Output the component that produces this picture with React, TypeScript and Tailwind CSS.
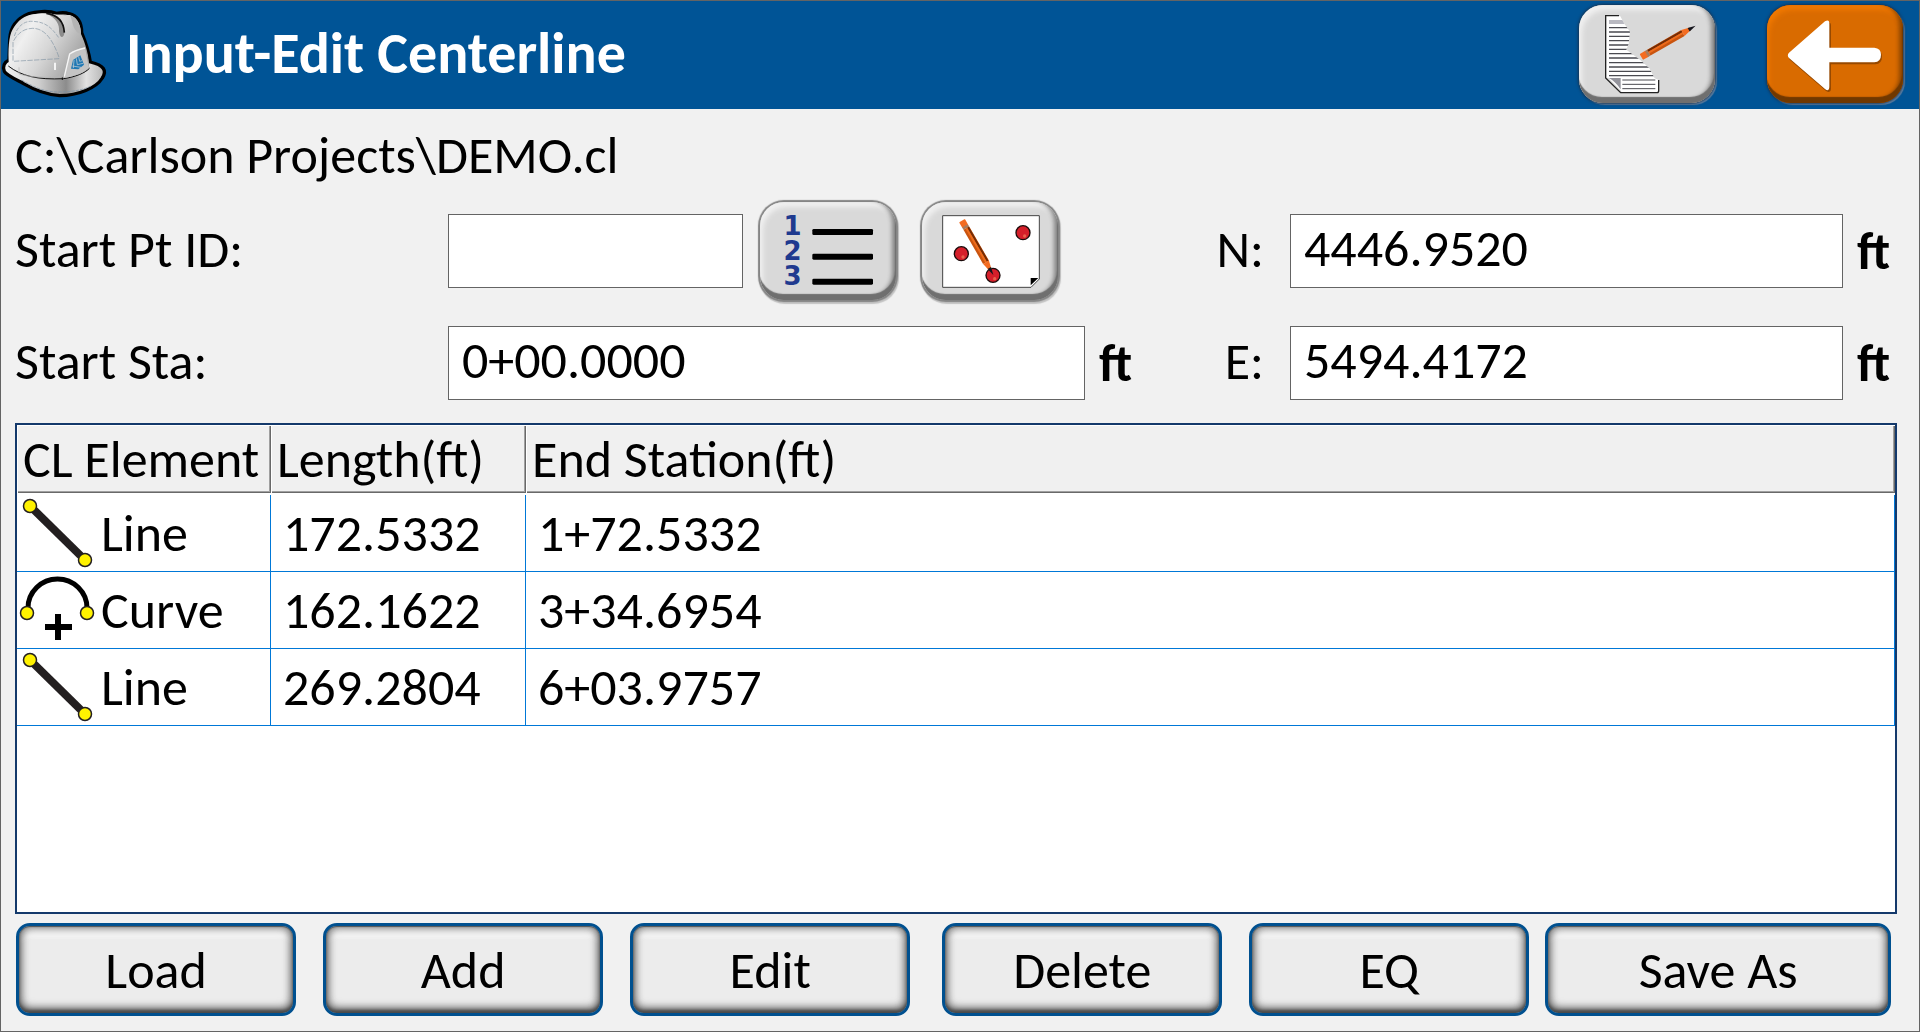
import { ReactNode, useState } from "react";

type ElementType = {
  kind: "Line" | "Curve";
  length: string;
  station: string;
};

const elements: ElementType[] = [
  { kind: "Line", length: "172.5332", station: "1+72.5332" },
  { kind: "Curve", length: "162.1622", station: "3+34.6954" },
  { kind: "Line", length: "269.2804", station: "6+03.9757" },
];

const actions = [
  { label: "Load", size: "flex-[280]" },
  { label: "Add", size: "flex-[280] ml-[27px]" },
  { label: "Edit", size: "flex-[280] ml-[27px]" },
  { label: "Delete", size: "flex-[280] ml-8" },
  { label: "EQ", size: "flex-[280] ml-[27px]" },
  { label: "Save As", size: "flex-[347] ml-4" },
];

const HardHat = () => (
  <svg viewBox="0 0 324 288" className="w-[108px] h-24 shrink-0" aria-hidden="true">
    <defs>
      <linearGradient id="shell" x1="0" y1="0" x2="1" y2="0.5">
        <stop offset="0" stopColor="#c9c9c9" />
        <stop offset="0.3" stopColor="#f0f0f0" />
        <stop offset="0.6" stopColor="#d6d6d6" />
        <stop offset="1" stopColor="#a0a0a0" />
      </linearGradient>
      <linearGradient id="brim" x1="0" y1="0" x2="1" y2="0">
        <stop offset="0" stopColor="#f2f2f2" />
        <stop offset="0.35" stopColor="#cfcfcf" />
        <stop offset="0.62" stopColor="#8c8c8c" />
        <stop offset="0.82" stopColor="#e2e2e2" />
        <stop offset="1" stopColor="#b5b5b5" />
      </linearGradient>
    </defs>
    <path
      d="M24 162 C10 168 4 182 10 196 C14 206 44 220 66 232 C104 254 140 266 176 269 C232 268 286 246 304 216 C318 194 310 178 268 168 C262 130 252 104 242 80 C242 52 232 30 204 23 C190 17 176 20 166 22 C140 12 100 18 84 23 C52 36 28 62 26 100 Z"
      fill="url(#brim)"
      stroke="#000"
      strokeWidth="10"
      strokeLinejoin="round"
    />
    <path
      d="M24 182 C20 130 24 90 34 72 C50 42 72 28 98 25 C140 18 164 30 206 27 C232 36 240 60 240 84 C252 110 266 150 264 190 C244 206 216 214 190 217 C130 224 66 212 24 182 Z"
      fill="url(#shell)"
    />
    <path d="M22 180 C60 210 110 222 188 218 C224 212 252 202 266 186" fill="none" stroke="#111" strokeWidth="3" />
    <path d="M138 23 C166 38 176 54 174 76 C176 98 188 98 190 82 C192 52 176 32 150 22 Z" fill="#8c8c8c" />
    <path d="M136 22 C166 26 188 42 190 80" fill="none" stroke="#111" strokeWidth="5" />
    <path d="M206 28 C216 42 212 60 226 76 C232 84 238 84 240 80 C236 48 226 34 206 28 Z" fill="#b4b4b4" />
    <path
      d="M40 90 C52 54 76 44 96 46 C136 48 152 66 174 96"
      fill="none"
      stroke="#8495a5"
      strokeWidth="2"
      strokeDasharray="12 4"
    />
    <path
      d="M36 164 V108 C48 84 66 68 94 67 C134 66 158 108 174 154 L174 158 L36 166"
      fill="none"
      stroke="#8495a5"
      strokeWidth="2"
      strokeDasharray="16 4"
    />
    <path d="M54 184 V204 C86 214 140 216 176 212 V184" fill="none" stroke="#b4b4b4" strokeWidth="2" />
    <path d="M162 170 V192" stroke="#fff" strokeWidth="5" />
    <path d="M188 216 L204 144 C212 136 232 130 252 124 L264 186 C244 204 216 212 188 216 Z" fill="#c4c4c4" />
    <path d="M190 212 L206 144 C214 138 234 130 252 126" fill="none" stroke="#f6f6f6" strokeWidth="4" />
    <path d="M184 214 V222" stroke="#111" strokeWidth="3" />
    <path d="M210 188 L216 162 L238 148 L249 176 L232 190 Z" fill="#1f78b4" />
    <path d="M219 162 L217 186 M226 157 L229 176 L246 172 M233 152 L236 166 L243 164 M214 180 L240 184" stroke="#d4d4d4" strokeWidth="2" fill="none" />
    <path d="M62 222 C100 244 130 258 172 258 C220 258 250 250 270 240" fill="none" stroke="#7890a5" strokeWidth="2" strokeDasharray="10 3" />
  </svg>
);

// pencil lies along the x axis, eraser at 0 and tip at 186
const Pencil = ({ transform }: { transform: string }) => (
  <g transform={transform}>
    <rect x="0" y="-10" width="20" height="20" rx="2" fill="#f36c21" />
    <rect x="18" y="-10" width="8" height="20" fill="#a87b5c" />
    <rect x="26" y="-10" width="118" height="20" fill="#c9540f" />
    <rect x="26" y="-9" width="118" height="6" fill="#742c05" />
    <rect x="26" y="-3" width="118" height="6" fill="#ee6c1c" />
    <path d="M144 -10 L170 -4 V4 L144 10 Z" fill="#f36c21" />
    <path d="M164 -6 L188 0 L164 6 Z" fill="#15151d" />
  </g>
);

const ReportIcon = () => (
  <svg viewBox="0 0 408 294" className="w-full h-full" aria-hidden="true">
    <defs>
      <clipPath id="sheet">
        <path d="M17 20 H60 L74 46 L90 68 L86 104 L79 122 L120 152 L148 178 L164 208 L178 214 V252 H62 L17 207 Z" />
      </clipPath>
    </defs>
    <g transform="translate(63 12)">
      <g clipPath="url(#sheet)">
        <rect x="17" y="20" width="165" height="232" fill="#fff" />
        <rect x="27" y="33" width="70" height="12" fill="#b9b9c1" />
        <path
          d="M27 56 H170 M27 69 H170 M27 82 H170 M27 95 H170 M27 108 H170 M27 121 H170 M27 134 H170 M27 147 H170 M27 161 H170 M27 174 H170 M27 187 H170 M27 200 H170"
          stroke="#4a4a50"
          strokeWidth="4"
        />
        <path d="M67 213 H166 M67 226 H166 M67 239 H166" stroke="#4a4a50" strokeWidth="3" />
        <path d="M17 205 H64 V252 H17 Z" fill="#fff" />
      </g>
      <path d="M17 206 H25 L64 246 V252 Z" fill="#dcdcdc" />
      <path d="M26 207 H62 V241 C54 230 42 214 26 207 Z" fill="#94949c" />
      <path d="M57 20 H17 V207 L62 251 H171 Q176 251 176 245 V213" fill="none" stroke="#222" strokeWidth="4" />
      <Pencil transform="translate(124 144) rotate(-30)" />
    </g>
  </svg>
);

const BackIcon = () => (
  <svg viewBox="0 0 408 294" className="w-full h-full" aria-hidden="true">
    <path
      d="M66 145 L174 51 Q189 43 189 58 V130 H322 Q342 132 342 151 Q342 172 322 174 H189 V246 Q189 262 174 254 L66 161 Q59 153 66 145 Z"
      fill="#7a3b00"
      opacity="0.7"
      transform="translate(3 4)"
    />
    <path
      d="M66 143 L174 49 Q187 41 187 56 V128 H322 Q342 130 342 149 Q342 170 322 172 H187 V244 Q187 262 174 252 L66 159 Q59 151 66 143 Z"
      fill="#fff"
    />
  </svg>
);

const ListIcon = () => (
  <svg viewBox="0 0 408 294" className="w-full h-full" aria-hidden="true">
    <g fill="#1f3a8f" fontSize="78" fontWeight="bold" fontFamily="'DejaVu Sans', sans-serif" textAnchor="middle">
      <text x="98" y="100">1</text>
      <text x="98" y="175">2</text>
      <text x="98" y="250">3</text>
    </g>
    <rect x="157" y="81" width="182" height="18" rx="4" />
    <rect x="157" y="155" width="182" height="18" rx="4" />
    <rect x="157" y="230" width="182" height="18" rx="4" />
  </svg>
);

const MapPoint = ({ x, y }: { x: number; y: number }) => (
  <g>
    <circle cx={x} cy={y} r="21" fill="#d51f2a" stroke="#1a0a0a" strokeWidth="4" />
    <circle cx={x + 5} cy={y + 10} r="5" fill="#e8604c" />
  </g>
);

const MapIcon = () => (
  <svg viewBox="0 0 408 294" className="w-full h-full" aria-hidden="true">
    <path d="M62 41 H352 V231 L327 256 H62 Z" fill="#fff" stroke="#444" strokeWidth="3" />
    <path d="M326 228 H349 L326 250 Z" fill="#000" />
    <MapPoint x={118} y={155} />
    <MapPoint x={303} y={92} />
    <MapPoint x={213} y={220} />
    <Pencil transform="translate(120 56) rotate(60)" />
  </svg>
);

const LineIcon = () => (
  <svg viewBox="0 0 80 76" className="w-20 h-[76px] shrink-0" aria-hidden="true">
    <path d="M11 11 L66 65" stroke="#231f20" strokeWidth="8" />
    <circle cx="11" cy="11" r="6.5" fill="#fff200" stroke="#231f20" strokeWidth="1.5" />
    <circle cx="66" cy="65" r="6.5" fill="#fff200" stroke="#231f20" strokeWidth="1.5" />
  </svg>
);

const CurveIcon = () => (
  <svg viewBox="0 0 80 76" className="w-20 h-[76px] shrink-0" aria-hidden="true">
    <path d="M9 38 V36 A29.5 29 0 0 1 68 36 V38" fill="none" stroke="#000" strokeWidth="5" />
    <circle cx="8" cy="41" r="6.5" fill="#fff200" stroke="#231f20" strokeWidth="1.5" />
    <circle cx="68" cy="41" r="6.5" fill="#fff200" stroke="#231f20" strokeWidth="1.5" />
    <path d="M39 42 V68 M26 55 H53" stroke="#000" strokeWidth="6" />
  </svg>
);

const tones = {
  orange:
    "bg-[#d96b00] shadow-[inset_-1px_-6px_1px_#703800,inset_-4px_-3px_4px_#8a4500,inset_2px_5px_5px_#f07800,0_0_3px_1px_#17324f,2px_2px_1px_#6c8db0]",
  header:
    "bg-[#d9d9d9] shadow-[inset_-1px_-6px_1px_#6f6f6f,inset_-4px_-3px_4px_#858585,inset_3px_5px_5px_#f0f0f0,0_0_3px_1px_#17324f,2px_2px_1px_#6c8db0]",
  form:
    "bg-[#d9d9d9] shadow-[inset_-1px_-6px_1px_#6f6f6f,inset_-4px_-3px_4px_#858585,inset_3px_5px_5px_#f0f0f0,0_0_1px_2px_#858585,1px_2px_1px_2px_#c4c4c4]",
};

const IconButton = ({ label, tone, children }: { label: string; tone: keyof typeof tones; children: ReactNode }) => (
  <button
    type="button"
    aria-label={label}
    className={`w-[136px] h-[98px] shrink-0 rounded-[24px] ${tones[tone]}`}
  >
    {children}
  </button>
);

const inputStyle =
  "h-[74px] min-w-0 w-full bg-white border border-[#646464] pl-[13px] pb-1.5 outline-none";

const thStyle =
  "h-[70px] text-left font-normal pl-1.5 bg-[#f0f0f0] bg-clip-padding border-b-2 border-white whitespace-nowrap shadow-[inset_1px_1px_#ffffff,inset_-1px_-1px_#696969,inset_-2px_-2px_#a0a0a0]";

const tdStyle = "h-[77px] p-0 border-r border-b border-[#0078d7]";

const App = () => {
  const [startPt, setStartPt] = useState("");
  const [startSta, setStartSta] = useState("0+00.0000");
  const [north, setNorth] = useState("4446.9520");
  const [east, setEast] = useState("5494.4172");

  return (
    <div className="min-h-screen flex flex-col bg-[#f1f1f1] border border-[#646464] text-black text-[52px] leading-none font-[Carlito,Calibri,Lato,sans-serif]">
      <header className="h-[108px] pb-0.5 pr-4 flex items-center bg-[#005496]">
        <HardHat />
        <h1 className="ml-[17px] flex-1 text-white font-bold text-[58px] leading-none">Input-Edit Centerline</h1>
        <div className="flex gap-[52px]">
          <IconButton label="Edit report" tone="header">
            <ReportIcon />
          </IconButton>
          <IconButton label="Back" tone="orange">
            <BackIcon />
          </IconButton>
        </div>
      </header>

      <main className="flex-1 flex flex-col pl-[14px] pr-[22px] pb-[15px]">
        <p className="h-[86px] pt-1.5 flex items-center">C:\Carlson Projects\DEMO.cl</p>

        <form className="grid grid-cols-[433px_1fr_128px_553px_54px] auto-rows-[112px] items-center">
          <label htmlFor="startPt" className="pb-1">
            Start Pt ID:
          </label>
          <div className="flex items-center pr-[104px]">
            <input
              id="startPt"
              type="text"
              className={inputStyle}
              value={startPt}
              onChange={(e) => setStartPt(e.target.value)}
            />
            <div className="flex gap-[26px] ml-[17px]">
              <IconButton label="Point list" tone="form">
                <ListIcon />
              </IconButton>
              <IconButton label="Pick from map" tone="form">
                <MapIcon />
              </IconButton>
            </div>
          </div>
          <label htmlFor="north" className="pb-1 pr-[26px] text-right">
            N:
          </label>
          <input
            id="north"
            type="text"
            className={inputStyle}
            value={north}
            onChange={(e) => setNorth(e.target.value)}
          />
          <span className="pl-3.5 font-bold">ft</span>

          <label htmlFor="startSta" className="pb-1">
            Start Sta:
          </label>
          <div className="flex items-center">
            <input
              id="startSta"
              type="text"
              className={inputStyle}
              value={startSta}
              onChange={(e) => setStartSta(e.target.value)}
            />
            <span className="w-[77px] shrink-0 pl-3.5 font-bold">ft</span>
          </div>
          <label htmlFor="east" className="pb-1 pr-[26px] text-right">
            E:
          </label>
          <input
            id="east"
            type="text"
            className={inputStyle}
            value={east}
            onChange={(e) => setEast(e.target.value)}
          />
          <span className="pl-3.5 font-bold">ft</span>
        </form>

        <div className="mt-1 flex-1 bg-white border-2 border-[#14396b]">
          <table className="w-full table-fixed border-separate border-spacing-0">
            <colgroup>
              <col className="w-[254px]" />
              <col className="w-[255px]" />
              <col />
            </colgroup>
            <thead>
              <tr>
                <th className={thStyle}>CL Element</th>
                <th className={thStyle}>Length(ft)</th>
                <th className={thStyle}>End Station(ft)</th>
              </tr>
            </thead>
            <tbody>
              {elements.map((item, index) => (
                <tr key={index}>
                  <td className={tdStyle}>
                    <div className="flex items-center gap-0.5 pl-0.5">
                      {item.kind === "Line" ? <LineIcon /> : <CurveIcon />}
                      <span>{item.kind}</span>
                    </div>
                  </td>
                  <td className={tdStyle}>
                    <span className="pl-3">{item.length}</span>
                  </td>
                  <td className={tdStyle}>
                    <span className="pl-3">{item.station}</span>
                  </td>
                </tr>
              ))}
            </tbody>
          </table>
        </div>

        <div className="mt-[9px] pl-px pr-1.5 flex">
          {actions.map((action) => (
            <button
              key={action.label}
              type="button"
              className={`${action.size} h-[93px] rounded-[14px] border-3 border-[#00508f] bg-[#ececec] shadow-[inset_0_1px_1px_#555555,inset_0_-3px_3px_#4a4a4a,inset_0_-5px_9px_#777777,inset_0_0_8px_2px_#7a7a7a,inset_0_12px_3px_#f5f5f5]`}
            >
              {action.label}
            </button>
          ))}
        </div>
      </main>
    </div>
  );
};

export default App;
